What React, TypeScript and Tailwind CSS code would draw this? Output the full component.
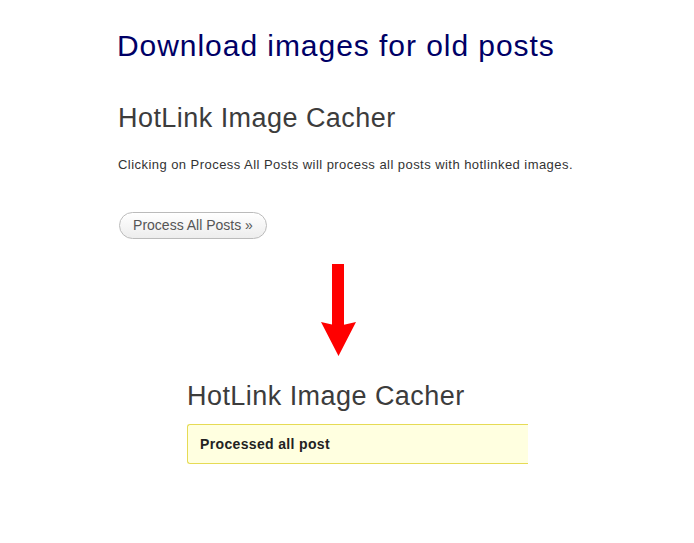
export default function App() {
  return (
    <div className="w-[694px] h-[543px] bg-white overflow-hidden font-['Liberation_Sans',Arial,sans-serif]">
      <div className="pl-[117px] pt-[28px]">
        <h1 className="text-[30px] leading-[36px] tracking-[0.95px] text-[#000066]">Download images for old posts</h1>

        <h2 className="mt-[38px] ml-[1px] text-[27px] leading-[32px] tracking-[0.45px] text-[#3c3c3c]">HotLink Image Cacher</h2>
        <p className="mt-[22px] ml-[1px] text-[13px] leading-[18px] tracking-[0.45px] text-[#333]">
          Clicking on Process All Posts will process all posts with hotlinked images.
        </p>

        <button className="block mt-[38px] ml-[2px] h-[27px] w-[148px] rounded-full border border-[#bbb] bg-gradient-to-b from-white to-[#ededed] text-[14px] text-[#555] shadow-[inset_0_1px_0_#fff]">
          Process All Posts »
        </button>
      </div>

      <div className="pl-[321px] mt-[25px]">
        <svg className="block" width="36" height="92" viewBox="0 0 36 92">
          <rect x="11" y="0" width="12" height="63" fill="#ff0000" />
          <path d="M0 58 L17.5 92 L35 58 L17.5 62 Z" fill="#ff0000" />
        </svg>
      </div>

      <div className="pl-[187px] mt-[24px]">
        <h2 className="text-[27px] leading-[32px] tracking-[0.45px] text-[#3c3c3c]">HotLink Image Cacher</h2>
        <div className="mt-[12px] w-[341px] h-[40px] flex items-center pl-[12px] bg-[#ffffe0] border border-r-0 border-[#e6db55] rounded-l-[3px]">
          <span className="text-[14px] font-bold tracking-[0.35px] text-[#222]">Processed all post</span>
        </div>
      </div>
    </div>
  );
}
